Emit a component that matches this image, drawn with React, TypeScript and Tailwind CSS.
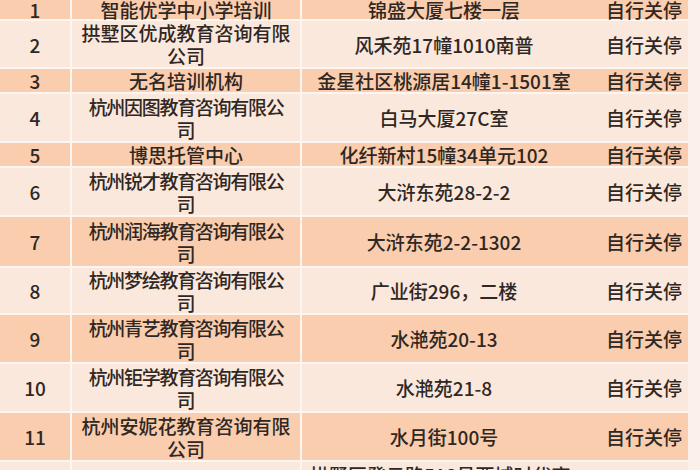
import React from "react";

type Row = { no: string; name: React.ReactNode; addr: React.ReactNode; status: string; h: string; peach: boolean };

const T = "tracking-[-1.3px]";

const rows: Row[] = [
  { no: "1", name: "智能优学中小学培训", addr: "锦盛大厦七楼一层", status: "自行关停", h: "h-[19px]", peach: true },
  { no: "2", name: <>拱墅区优成教育咨询有限<br />公司</>, addr: "风禾苑17幢1010南普", status: "自行关停", h: "h-[46px]", peach: false },
  { no: "3", name: "无名培训机构", addr: "金星社区桃源居14幢1-1501室", status: "自行关停", h: "h-[23px]", peach: true },
  { no: "4", name: <><span className={T}>杭州因图教育咨询有限公</span><br />司</>, addr: "白马大厦27C室", status: "自行关停", h: "h-[47px]", peach: false },
  { no: "5", name: "博思托管中心", addr: "化纤新村15幢34单元102", status: "自行关停", h: "h-[23px]", peach: true },
  { no: "6", name: <><span className={T}>杭州锐才教育咨询有限公</span><br />司</>, addr: "大浒东苑28-2-2", status: "自行关停", h: "h-[47px]", peach: false },
  { no: "7", name: <><span className={T}>杭州润海教育咨询有限公</span><br />司</>, addr: "大浒东苑2-2-1302", status: "自行关停", h: "h-[49px]", peach: true },
  { no: "8", name: <><span className={T}>杭州梦绘教育咨询有限公</span><br />司</>, addr: "广业街296，二楼", status: "自行关停", h: "h-[45px]", peach: false },
  { no: "9", name: <><span className={T}>杭州青艺教育咨询有限公</span><br />司</>, addr: "水滟苑20-13", status: "自行关停", h: "h-[47px]", peach: true },
  { no: "10", name: <><span className={T}>杭州钜学教育咨询有限公</span><br />司</>, addr: "水滟苑21-8", status: "自行关停", h: "h-[47px]", peach: false },
  { no: "11", name: <>杭州安妮花教育咨询有限<br />公司</>, addr: "水月街100号", status: "自行关停", h: "h-[47px]", peach: true },
];

export default function App() {
  return (
    <div
      className="w-[700px] h-[470px] overflow-hidden bg-[#fcf1ea] text-[#2f2723] text-[19px] leading-[23px] font-medium"
      style={{ fontFamily: '"Noto Sans CJK SC", "Liberation Sans", sans-serif' }}
    >
      <div className="w-[688px] flex flex-col gap-[2px] bg-[#fdf5ef]">
        {rows.map((r) => {
          const bg = r.peach ? "bg-[#f9cdad]" : "bg-[#fbe8dc]";
          return (
            <div key={r.no} className={`flex gap-[2px] ${r.h}`}>
              <div className={`w-[70px] flex items-center justify-center ${bg}`}>{r.no}</div>
              <div className={`w-[228px] flex items-center justify-center text-center whitespace-nowrap ${bg}`}>
                <div>{r.name}</div>
              </div>
              <div className={`flex-1 flex items-center ${bg}`}>
                <div className="w-[284px] text-center whitespace-nowrap">{r.addr}</div>
                <div className="flex-1 text-right pr-[6px] whitespace-nowrap">{r.status}</div>
              </div>
            </div>
          );
        })}
        <div className="flex gap-[2px] h-[60px]">
          <div className="w-[70px] bg-[#fbe8dc]" />
          <div className="w-[228px] bg-[#fbe8dc]" />
          <div className="flex-1 bg-[#fbe8dc] pl-[8px] pt-[1px] whitespace-nowrap">拱墅区登云路518号西城时代商</div>
        </div>
      </div>
    </div>
  );
}
